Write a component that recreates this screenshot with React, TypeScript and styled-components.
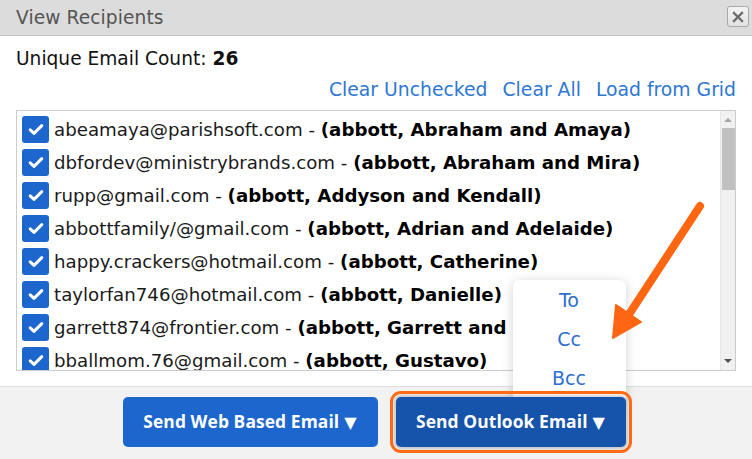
import React from "react";
import styled, { createGlobalStyle } from "styled-components";

const GlobalStyle = createGlobalStyle`
  html, body { margin: 0; padding: 0; background: #fff; }
  body { font-family: "DejaVu Sans", "Open Sans", sans-serif; color: #1a1a1a; }
  * { box-sizing: border-box; }
`;

const Dialog = styled.div`
  position: relative;
  width: 752px;
  height: 459px;
  display: flex;
  flex-direction: column;
  overflow: hidden;
  background: #fff;
`;

const TitleBar = styled.div`
  height: 36px;
  flex: none;
  display: flex;
  align-items: center;
  justify-content: space-between;
  padding: 0 3px 2px 16px;
  background: #dcdcdc;
  border-bottom: 1px solid #c3c3c3;
`;

const Title = styled.div`
  font-size: 18.6px;
  color: #555;
  letter-spacing: 0.1px;
  padding-top: 1px;
`;

const CloseButton = styled.button`
  width: 22px;
  height: 21px;
  padding: 0;
  display: flex;
  align-items: center;
  justify-content: center;
  border: 1px solid #a9a9a9;
  border-radius: 3px;
  background: linear-gradient(#f4f4f4, #e2e2e2);
`;

const Body = styled.div`
  flex: 1;
  display: flex;
  flex-direction: column;
  padding: 0 16px;
`;

const CountLine = styled.div`
  height: 26px;
  margin-top: 9px;
  display: flex;
  align-items: center;
  font-size: 18.6px;
  color: #111;
  b { font-weight: 700; margin-left: 6px; }
`;

const LinksRow = styled.div`
  height: 26px;
  margin-top: 5px;
  display: flex;
  justify-content: flex-end;
  align-items: center;
  gap: 15px;
`;

const Link = styled.a`
  font-size: 18.8px;
  color: #2e78d2;
  text-decoration: none;
  cursor: pointer;
`;

const ListBox = styled.div`
  margin-top: 8px;
  height: 261px;
  border: 1px solid #cccccc;
  display: grid;
  grid-template-columns: 1fr 15px;
  overflow: hidden;
`;

const Rows = styled.div`
  padding-top: 2px;
  overflow: hidden;
`;

const Row = styled.div`
  height: 33px;
  display: flex;
  align-items: center;
  padding-left: 5px;
  gap: 5px;
  font-size: 18.2px;
  white-space: nowrap;
  b { font-weight: 700; color: #000; }
`;

const Check = styled.span`
  width: 27px;
  height: 27px;
  flex: none;
  border-radius: 3px;
  background: #1c66cd;
  display: flex;
  align-items: center;
  justify-content: center;
`;

const ScrollTrack = styled.div`
  background: #f1f1f1;
  border-left: 1px solid #e6e6e6;
  display: flex;
  flex-direction: column;
  align-items: center;
`;

const ScrollArrow = styled.div<{ $down?: boolean }>`
  width: 0;
  height: 0;
  border-left: 4px solid transparent;
  border-right: 4px solid transparent;
  ${(p) => (p.$down ? "border-top: 4px solid #505050;" : "border-bottom: 4px solid #a3a3a3;")}
  margin: ${(p) => (p.$down ? "auto 0 7px" : "7px 0 0")};
`;

const ScrollThumb = styled.div`
  width: 13px;
  height: 62px;
  margin-top: 6px;
  background: #c1c1c1;
`;

const Footer = styled.div`
  margin-top: 15px;
  flex: 1;
  background: #f2f2f2;
  border-top: 1px solid #dddddd;
  display: flex;
  justify-content: center;
  align-items: flex-start;
  gap: 18px;
  padding: 10px 4px 0 0;
`;

const ButtonSlot = styled.div`
  position: relative;
`;

const SendButton = styled.button<{ $width: number; $active?: boolean }>`
  position: relative;
  z-index: 3;
  width: ${(p) => p.$width}px;
  height: 50px;
  padding: 0;
  border: none;
  border-radius: 5px;
  background: ${(p) => (p.$active ? "#1653aa" : "#1c66cd")};
  color: #fff;
  font-family: "Open Sans", sans-serif;
  font-weight: 700;
  font-size: 17.4px;
  line-height: 24px;
  letter-spacing: 0.1px;
  cursor: pointer;
  ${(p) =>
    p.$active
      ? "outline: 3px solid #ff6a13; outline-offset: 3px; box-shadow: 0 0 3px 2px rgba(0,0,0,0.18);"
      : ""}
`;

const Caret = styled.span`
  font-family: "DejaVu Sans", sans-serif;
  font-size: 16px;
  margin-left: 5px;
`;

const Menu = styled.div`
  position: absolute;
  right: 0;
  bottom: calc(100% - 2px);
  width: 113px;
  height: 119px;
  overflow: hidden;
  background: #fff;
  border-radius: 6px 6px 0 0;
  box-shadow: 0 2px 12px rgba(0, 0, 0, 0.18);
  display: flex;
  flex-direction: column;
  z-index: 2;
`;

const MenuItem = styled.div`
  height: 39px;
  flex: none;
  display: flex;
  align-items: center;
  justify-content: center;
  font-size: 19px;
  color: #2e6fd0;
`;

const Annotation = styled.svg`
  position: absolute;
  left: 0;
  top: 0;
  width: 752px;
  height: 459px;
  pointer-events: none;
  z-index: 4;
`;

const recipients: [string, string][] = [
  ["abeamaya@parishsoft.com", "abbott, Abraham and Amaya"],
  ["dbfordev@ministrybrands.com", "abbott, Abraham and Mira"],
  ["rupp@gmail.com", "abbott, Addyson and Kendall"],
  ["abbottfamily/@gmail.com", "abbott, Adrian and Adelaide"],
  ["happy.crackers@hotmail.com", "abbott, Catherine"],
  ["taylorfan746@hotmail.com", "abbott, Danielle"],
  ["garrett874@frontier.com", "abbott, Garrett and Gail"],
  ["bballmom.76@gmail.com", "abbott, Gustavo"],
];

const CheckMark = () => (
  <svg width="16" height="13" viewBox="0 0 16 13">
    <path d="M2.2 6.8 L6 10.4 L13.8 2.6" fill="none" stroke="#fff" strokeWidth="3" strokeLinecap="round" strokeLinejoin="round" />
  </svg>
);

export default function App() {
  return (
    <>
      <GlobalStyle />
      <Dialog>
        <TitleBar>
          <Title>View Recipients</Title>
          <CloseButton aria-label="Close">
            <svg width="12" height="12" viewBox="0 0 12 12">
              <path d="M2 2 L10 10 M10 2 L2 10" stroke="#6e6e6e" strokeWidth="2.4" strokeLinecap="square" />
            </svg>
          </CloseButton>
        </TitleBar>
        <Body>
          <CountLine>
            Unique Email Count:<b>26</b>
          </CountLine>
          <LinksRow>
            <Link>Clear Unchecked</Link>
            <Link>Clear All</Link>
            <Link>Load from Grid</Link>
          </LinksRow>
          <ListBox>
            <Rows>
              {recipients.map(([email, name]) => (
                <Row key={email}>
                  <Check>
                    <CheckMark />
                  </Check>
                  <span>
                    {email} - <b>({name})</b>
                  </span>
                </Row>
              ))}
            </Rows>
            <ScrollTrack>
              <ScrollArrow />
              <ScrollThumb />
              <ScrollArrow $down />
            </ScrollTrack>
          </ListBox>
        </Body>
        <Footer>
          <ButtonSlot>
            <SendButton $width={255}>
              Send Web Based Email<Caret>▼</Caret>
            </SendButton>
          </ButtonSlot>
          <ButtonSlot>
            <Menu>
              <MenuItem>To</MenuItem>
              <MenuItem>Cc</MenuItem>
              <MenuItem>Bcc</MenuItem>
            </Menu>
            <SendButton $width={230} $active>
              Send Outlook Email<Caret>▼</Caret>
            </SendButton>
          </ButtonSlot>
        </Footer>
        <Annotation viewBox="0 0 752 459">
          <path d="M700 206 L624 322" stroke="#ff6611" strokeWidth="8" strokeLinecap="round" fill="none" />
          <path d="M613 338 L616 305 L641 322 Z" fill="#ff6611" stroke="#ff6611" strokeWidth="2" strokeLinejoin="round" />
        </Annotation>
      </Dialog>
    </>
  );
}
